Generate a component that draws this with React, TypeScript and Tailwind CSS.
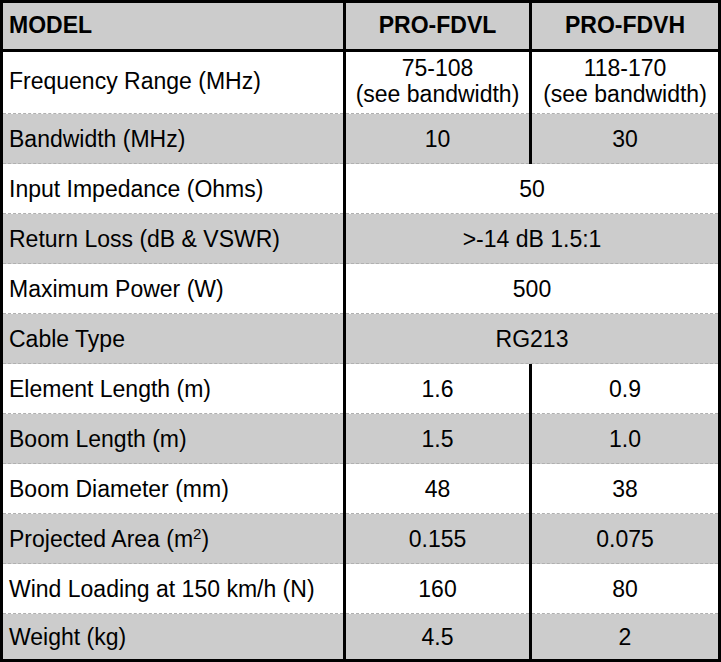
import React from "react";

type Row = {
  label: React.ReactNode;
  a: React.ReactNode;
  b?: React.ReactNode;
  gray: boolean;
  h: string;
  last?: boolean;
  pad?: string;
};

const rows: Row[] = [
  {
    label: "Frequency Range (MHz)",
    a: (
      <>
        75-108
        <br />
        (see bandwidth)
      </>
    ),
    b: (
      <>
        118-170
        <br />
        (see bandwidth)
      </>
    ),
    gray: false,
    h: "h-[62px]",
    pad: "pb-[3px]",
  },
  { label: "Bandwidth (MHz)", a: "10", b: "30", gray: true, h: "h-[50px]" },
  { label: "Input Impedance (Ohms)", a: "50", gray: false, h: "h-[50px]" },
  { label: "Return Loss (dB & VSWR)", a: ">-14 dB 1.5:1", gray: true, h: "h-[50px]" },
  { label: "Maximum Power (W)", a: "500", gray: false, h: "h-[50px]" },
  { label: "Cable Type", a: "RG213", gray: true, h: "h-[50px]" },
  { label: "Element Length (m)", a: "1.6", b: "0.9", gray: false, h: "h-[50px]" },
  { label: "Boom Length (m)", a: "1.5", b: "1.0", gray: true, h: "h-[50px]" },
  { label: "Boom Diameter (mm)", a: "48", b: "38", gray: false, h: "h-[50px]" },
  {
    label: (
      <>
        Projected Area (m<sup className="text-[15px] relative -top-[5px]">2</sup>)
      </>
    ),
    a: "0.155",
    b: "0.075",
    gray: true,
    h: "h-[50px]",
  },
  { label: "Wind Loading at 150 km/h (N)", a: "160", b: "80", gray: false, h: "h-[50px]" },
  { label: "Weight (kg)", a: "4.5", b: "2", gray: true, h: "h-[45px]", last: true },
];

function Sep() {
  return <div className="w-[3px] shrink-0 self-stretch bg-black" />;
}

export default function App() {
  return (
    <div
      className="w-[721px] h-[662px] border-[3px] border-black bg-white text-black text-[23px] leading-[26px] flex flex-col"
      style={{ fontFamily: '"Liberation Sans", Arial, sans-serif' }}
    >
      <div className="flex h-[49px] border-b-[3px] border-black bg-[#cccccc] font-bold">
        <div className="w-[340px] shrink-0 flex items-center pl-[6px] pb-[2px]">MODEL</div>
        <Sep />
        <div className="w-[183px] shrink-0 flex items-center justify-center pb-[2px]">PRO-FDVL</div>
        <Sep />
        <div className="w-[186px] shrink-0 flex items-center justify-center pb-[2px]">PRO-FDVH</div>
      </div>
      {rows.map((r, i) => {
        const bg = r.gray ? "bg-[#cccccc]" : "bg-white";
        const bd = r.last ? "" : "border-b border-dashed border-[#b0b0b0]";
        const pad = r.pad ?? "";
        return (
          <div key={i} className={`flex ${r.h} ${bg}`}>
            <div className={`w-[340px] shrink-0 flex items-center pl-[6px] ${pad} ${bd}`}>{r.label}</div>
            <Sep />
            {r.b !== undefined ? (
              <>
                <div className={`w-[183px] shrink-0 flex items-center justify-center text-center ${pad} ${bd}`}>
                  {r.a}
                </div>
                <Sep />
                <div className={`w-[186px] shrink-0 flex items-center justify-center text-center ${pad} ${bd}`}>
                  {r.b}
                </div>
              </>
            ) : (
              <div className={`w-[372px] shrink-0 flex items-center justify-center text-center ${pad} ${bd}`}>
                {r.a}
              </div>
            )}
          </div>
        );
      })}
    </div>
  );
}
